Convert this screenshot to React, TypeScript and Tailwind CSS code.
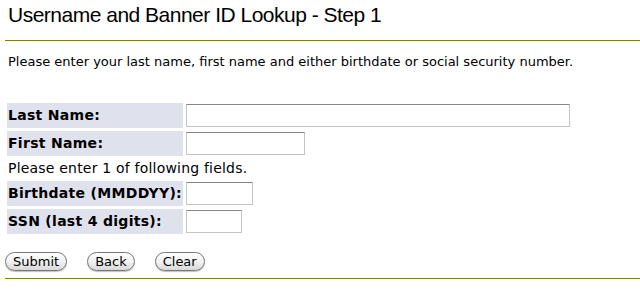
export default function App() {
  const rows = [
    { label: "Last Name:", w: "w-[384px]" },
    { label: "First Name:", w: "w-[119px]" },
  ];
  const rows2 = [
    { label: "Birthdate (MMDDYY):", w: "w-[67px]" },
    { label: "SSN (last 4 digits):", w: "w-[56px]" },
  ];
  const field = (label: string, w: string) => (
    <div key={label} className="flex gap-[3px] h-[25px]">
      <div className="w-[176px] bg-[#dfe1ec] font-bold text-[14px] tracking-[0.3px] pl-[1px] flex items-center">{label}</div>
      <input
        type="text"
        className={`${w} h-[23px] mt-[1px] bg-white border border-[#c4c4c4] border-t-[#888] outline-none`}
      />
    </div>
  );
  const btn = "h-[19px] rounded-full border border-[#777] bg-gradient-to-b from-white via-[#f2f2f2] to-[#d8d8d8] px-[7px] text-[13px] leading-[17px] text-black shadow-[0_1px_1px_rgba(0,0,0,0.25)]";

  return (
    <div className="min-h-screen bg-white text-black font-['DejaVu_Sans',Verdana,sans-serif]">
      <h1 className="pl-[8px] pt-[1px] text-[21px] tracking-[-0.5px] leading-[28px] font-normal font-['Liberation_Sans',Tahoma,sans-serif]">Username and Banner ID Lookup - Step 1</h1>
      <div className="ml-[5px] mt-[11px] h-px bg-[#7d7d1e]" />
      <p className="pl-[8px] mt-[13px] text-[13px] leading-[16px]">
        Please enter your last name, first name and either birthdate or social security number.
      </p>
      <div className="ml-[7px] mt-[33px] flex flex-col gap-[3px]">
        {rows.map((r) => field(r.label, r.w))}
        <div className="h-[19px] text-[14px] tracking-[0.2px] leading-[19px] pl-[1px]">Please enter 1 of following fields.</div>
        {rows2.map((r) => field(r.label, r.w))}
      </div>
      <div className="ml-[5px] mt-[18px] flex gap-[20px]">
        <button className={btn}>Submit</button>
        <button className={btn}>Back</button>
        <button className={btn}>Clear</button>
      </div>
      <div className="ml-[5px] mt-[7px] h-px bg-[#7d7d1e]" />
    </div>
  );
}
